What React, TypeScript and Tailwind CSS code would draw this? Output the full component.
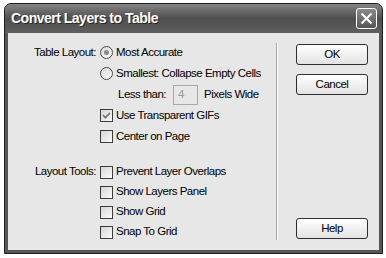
import { X } from "lucide-react";

function Radio({ checked }: { checked?: boolean }) {
  return (
    <span className="flex h-[13px] w-[13px] shrink-0 items-center justify-center rounded-full border border-[#4a4a4a] bg-gradient-to-br from-[#d8d8d8] to-[#ffffff]">
      {checked && <span className="h-[5px] w-[5px] rounded-full bg-[#8a8a8a]" />}
    </span>
  );
}

function Check({ checked }: { checked?: boolean }) {
  return (
    <span className="flex h-[13px] w-[13px] shrink-0 items-center justify-center border border-[#3c3c3c] bg-gradient-to-br from-[#d6d6d6] to-[#fbfbfb]">
      {checked && (
        <svg width="9" height="9" viewBox="0 0 9 9">
          <path d="M1 4.2 L3.4 6.6 L8 1.8" fill="none" stroke="#7a7a7a" strokeWidth="1.8" />
        </svg>
      )}
    </span>
  );
}

function Row({ label, children }: { label?: string; children: React.ReactNode }) {
  return (
    <div className="flex items-center">
      <span className="w-[92px] pr-[4px] text-right">{label}</span>
      <div className="flex items-center gap-[3px]">{children}</div>
    </div>
  );
}

function Btn({ children }: { children: React.ReactNode }) {
  return (
    <button className="flex h-[21px] w-[72px] items-center justify-center rounded-[3px] border border-[#2e2e2e] bg-gradient-to-b from-[#ffffff] to-[#e2e2e2] text-black">
      {children}
    </button>
  );
}

export default function App() {
  return (
    <div
      className="h-[258px] w-[386px] bg-white pb-[4px] pl-[4px] pr-[3px] pt-[3px] text-[11.5px] tracking-[-0.5px] text-black"
      style={{ fontFamily: "'Liberation Sans', Arial, sans-serif" }}
    >
      <div className="flex h-full flex-col rounded-t-[7px] border border-[#1e1e1e] bg-[#565656]">
        {/* Title bar */}
        <div className="flex h-[29px] shrink-0 items-center justify-between rounded-t-[6px] bg-gradient-to-b from-[#858585] via-[#4f4f4f] to-[#5e5e5e] pl-[6px] pr-[5px]">
          <span className="text-[14px] font-bold tracking-[-0.5px] text-white [text-shadow:1px_1px_0_#262626]">
            Convert Layers to Table
          </span>
          <span className="flex h-[21px] w-[21px] items-center justify-center rounded-[3px] border border-white bg-gradient-to-b from-[#8a8a8a] to-[#555555]">
            <X size={17} strokeWidth={3} color="white" strokeLinecap="square" />
          </span>
        </div>

        {/* Body */}
        <div className="mx-[3px] mb-[3px] flex flex-1 bg-[#e7e7e7]">
          <div className="flex flex-1 flex-col pt-[9px]">
            <div className="flex flex-col [&>div]:h-[21px]">
              <Row label="Table Layout:">
                <Radio checked />
                <span>Most Accurate</span>
              </Row>
              <Row>
                <Radio />
                <span>Smallest: Collapse Empty Cells</span>
              </Row>
              <Row>
                <span className="w-[13px]" />
                <span className="pl-[2px]">Less than:</span>
                <span className="ml-[4px] flex h-[20px] w-[25px] items-center border border-[#a8a8a8] pl-[4px] text-[#9a9a9a]">
                  4
                </span>
                <span className="ml-[3px]">Pixels Wide</span>
              </Row>
              <Row>
                <Check checked />
                <span>Use Transparent GIFs</span>
              </Row>
              <Row>
                <Check />
                <span>Center on Page</span>
              </Row>
            </div>
            <div className="mt-[15px] flex flex-col [&>div]:h-[20px]">
              <Row label="Layout Tools:">
                <Check />
                <span>Prevent Layer Overlaps</span>
              </Row>
              <Row>
                <Check />
                <span>Show Layers Panel</span>
              </Row>
              <Row>
                <Check />
                <span>Show Grid</span>
              </Row>
              <Row>
                <Check />
                <span>Snap To Grid</span>
              </Row>
            </div>
          </div>

          <div className="my-[10px] flex">
            <div className="w-px bg-[#a6a6a6]" />
            <div className="w-px bg-white" />
          </div>

          <div className="flex flex-col justify-between pb-[11px] pl-[18px] pr-[11px] pt-[11px]">
            <div className="flex flex-col gap-[9px]">
              <Btn>OK</Btn>
              <Btn>Cancel</Btn>
            </div>
            <Btn>Help</Btn>
          </div>
        </div>
      </div>
    </div>
  );
}
